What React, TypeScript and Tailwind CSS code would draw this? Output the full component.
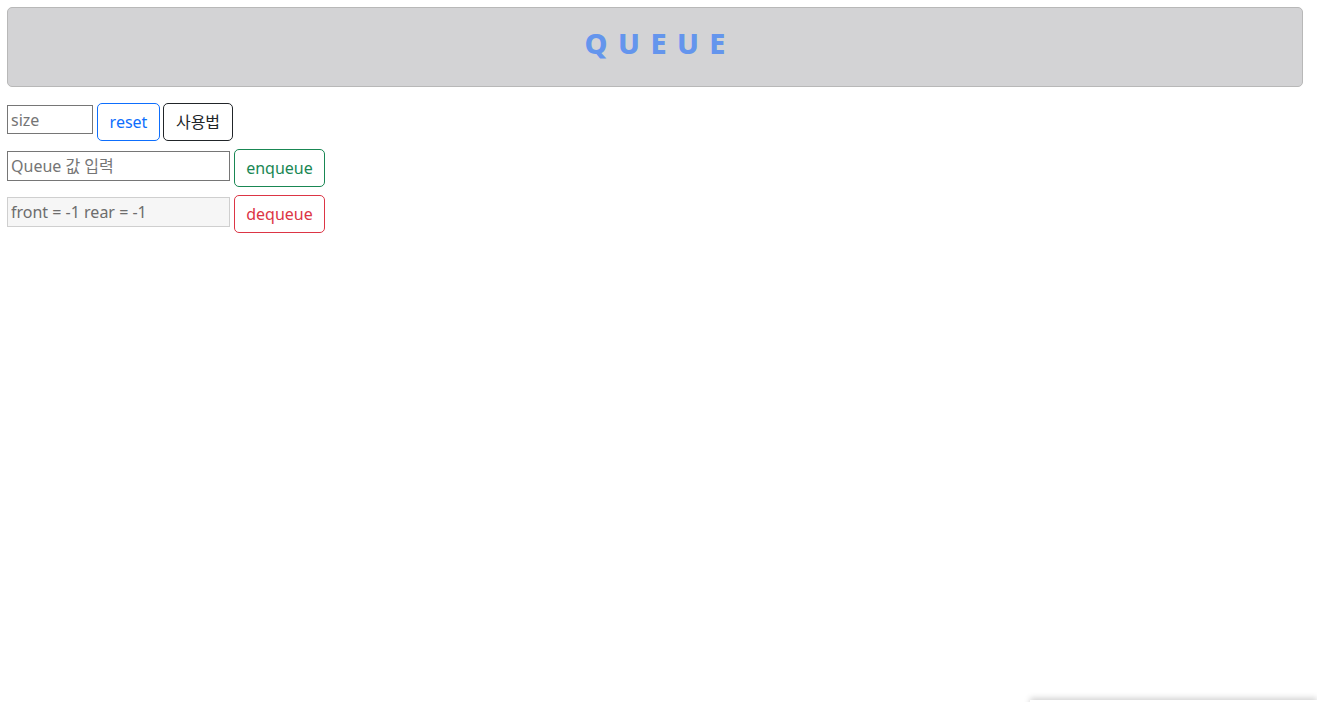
import React from "react";

export default function App() {
  const font = { fontFamily: '"Noto Sans", "Noto Sans CJK KR", sans-serif' };
  return (
    <div className="relative h-[702px] w-[1317px] overflow-hidden bg-white" style={font}>
      <div className="ml-[7px] mt-[7px] mr-[14px] flex h-[80px] items-center justify-center rounded-[5px] border border-[#b8b8b8] bg-[#d3d3d5] pb-[9px]">
        <h1 className="pl-[0.36em] text-[29px] font-extrabold tracking-[0.36em] text-[#6495ed]">QUEUE</h1>
      </div>
      <div className="ml-[7px] mt-[16px] flex flex-col gap-[8px]">
        <div className="flex items-start gap-[4px]">
          <input
            placeholder="size"
            className="mt-[2px] h-[29px] w-[86px] border border-[#767676] px-[3px] text-[16px] text-black placeholder:text-[#757575]"
          />
          <button className="h-[38px] w-[63px] rounded-[5px] border border-[#0d6efd] text-[16px] text-[#0d6efd]">reset</button>
          <button className="ml-[-1px] h-[38px] w-[70px] rounded-[5px] border border-[#212529] text-[16px] text-[#212529]">사용법</button>
        </div>
        <div className="flex items-start gap-[4px]">
          <input
            placeholder="Queue 값 입력"
            className="mt-[2px] h-[30px] w-[223px] border border-[#767676] px-[3px] text-[16px] text-black placeholder:text-[#757575]"
          />
          <button className="h-[38px] w-[91px] rounded-[5px] border border-[#198754] text-[16px] text-[#198754]">enqueue</button>
        </div>
        <div className="flex items-start gap-[4px]">
          <input
            disabled
            value="front = -1 rear = -1"
            readOnly
            className="mt-[2px] h-[30px] w-[223px] border border-[#cfcfcf] bg-[#f6f6f6] px-[3px] text-[16px] text-[#6d6d6d]"
          />
          <button className="h-[38px] w-[91px] rounded-[5px] border border-[#dc3545] text-[16px] text-[#dc3545]">dequeue</button>
        </div>
      </div>
      <div className="absolute left-[1030px] top-[700px] h-[40px] w-[287px] bg-white shadow-[0_-2px_6px_rgba(0,0,0,0.18)]" />
    </div>
  );
}
